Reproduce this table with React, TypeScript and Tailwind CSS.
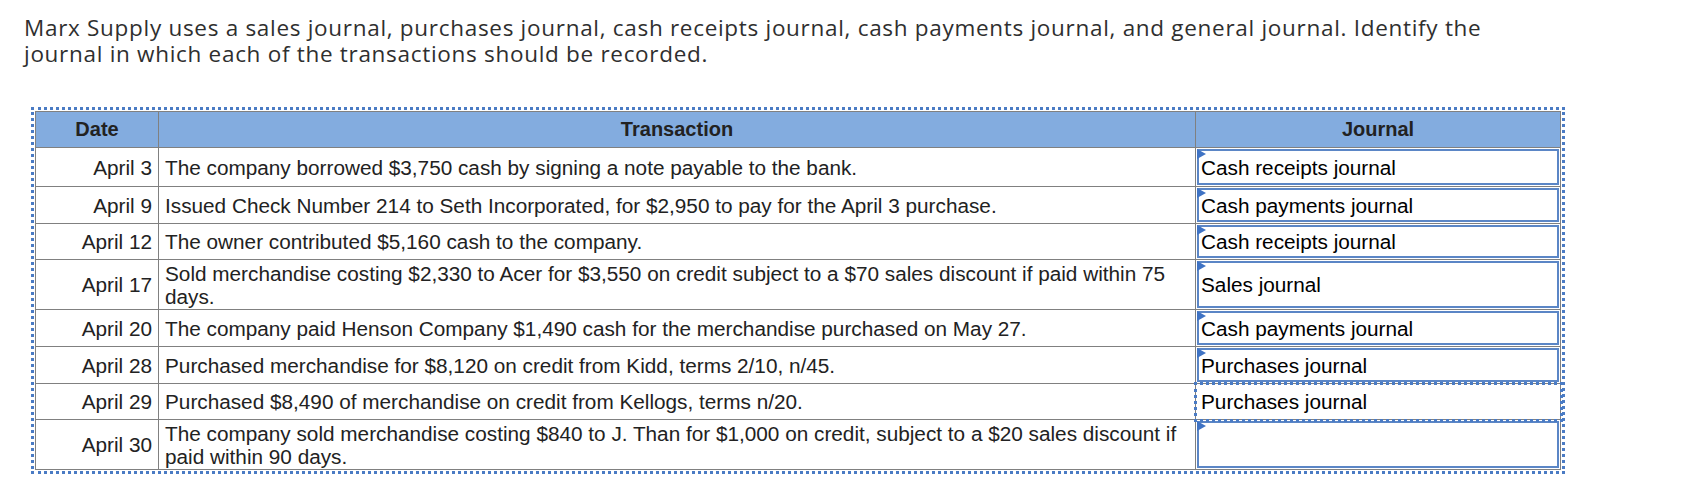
import React from "react";

type Row = {
  date: string;
  lines: string[];
  journal: string;
  h: string;
  selected?: boolean;
  last?: boolean;
};

const rows: Row[] = [
  { date: "April 3", lines: ["The company borrowed $3,750 cash by signing a note payable to the bank."], journal: "Cash receipts journal", h: "h-[39px]" },
  { date: "April 9", lines: ["Issued Check Number 214 to Seth Incorporated, for $2,950 to pay for the April 3 purchase."], journal: "Cash payments journal", h: "h-[37px]" },
  { date: "April 12", lines: ["The owner contributed $5,160 cash to the company."], journal: "Cash receipts journal", h: "h-[36px]" },
  { date: "April 17", lines: ["Sold merchandise costing $2,330 to Acer for $3,550 on credit subject to a $70 sales discount if paid within 75", "days."], journal: "Sales journal", h: "h-[50px]" },
  { date: "April 20", lines: ["The company paid Henson Company $1,490 cash for the merchandise purchased on May 27."], journal: "Cash payments journal", h: "h-[37px]" },
  { date: "April 28", lines: ["Purchased merchandise for $8,120 on credit from Kidd, terms 2/10, n/45."], journal: "Purchases journal", h: "h-[37px]" },
  { date: "April 29", lines: ["Purchased $8,490 of merchandise on credit from Kellogs, terms n/20."], journal: "Purchases journal", h: "h-[36px]", selected: true },
  { date: "April 30", lines: ["The company sold merchandise costing $840 to J. Than for $1,000 on credit, subject to a $20 sales discount if", "paid within 90 days."], journal: "", h: "h-[49px]", last: true },
];

function Flag() {
  return (
    <svg className="absolute -left-[2px] -top-[2px]" width="9" height="10" viewBox="0 0 9 10">
      <polygon points="0,0 9,5 0,10" fill="#3f73c4" />
    </svg>
  );
}

export default function App() {
  return (
    <div className="w-[1701px] h-[503px] bg-white overflow-hidden">
      <div className="pl-[24px] pt-[15px] text-[22.5px] leading-[26px] tracking-[0.7px] text-[#2f2f2f] whitespace-nowrap font-['Open_Sans',sans-serif]">
        <p>Marx Supply uses a sales journal, purchases journal, cash receipts journal, cash payments journal, and general journal. Identify the</p>
        <p>journal in which each of the transactions should be recorded.</p>
      </div>
      <div className="mt-[40px] ml-[31px] w-[1534px] border-[3px] border-dotted border-[#4a7bc4] p-[1px]">
        <div className="border border-[#808080] font-['Liberation_Sans',Arial,sans-serif] text-[20.75px] leading-[23px]">
          <div className="flex h-[36px] border-b border-[#808080] bg-[#83acdf] font-bold text-[20px] text-[#222]">
            <div className="w-[123px] shrink-0 border-r border-[#808080] flex items-center justify-center">Date</div>
            <div className="w-[1037px] shrink-0 border-r border-[#808080] flex items-center justify-center">Transaction</div>
            <div className="flex-1 flex items-center justify-center">Journal</div>
          </div>
          {rows.map((r) => (
            <div key={r.date} className={`flex ${r.h} ${r.last ? "" : "border-b border-[#808080]"}`}>
              <div className="w-[123px] shrink-0 border-r border-[#808080] flex items-center justify-end pr-[6px] text-[#222]">
                {r.date}
              </div>
              <div className="w-[1037px] shrink-0 border-r border-[#808080] flex flex-col justify-center pl-[6px] text-[#222] whitespace-nowrap">
                {r.lines.map((l, i) => (
                  <span key={i}>{l}</span>
                ))}
              </div>
              <div className="flex-1 relative">
                {r.selected ? (
                  <>
                    <div className="h-full flex items-center pl-[5px] text-black">{r.journal}</div>
                    <div className="absolute -left-[2px] -top-[2px] -right-[3px] -bottom-[3px] z-10 border-[3px] border-dotted border-[#4a7bc4]" />
                  </>
                ) : (
                  <div className="relative m-[1px] h-[calc(100%-2px)] border-2 border-[#5b86c6] flex items-center pl-[2px] text-black">
                    <Flag />
                    {r.journal}
                  </div>
                )}
              </div>
            </div>
          ))}
        </div>
      </div>
    </div>
  );
}
